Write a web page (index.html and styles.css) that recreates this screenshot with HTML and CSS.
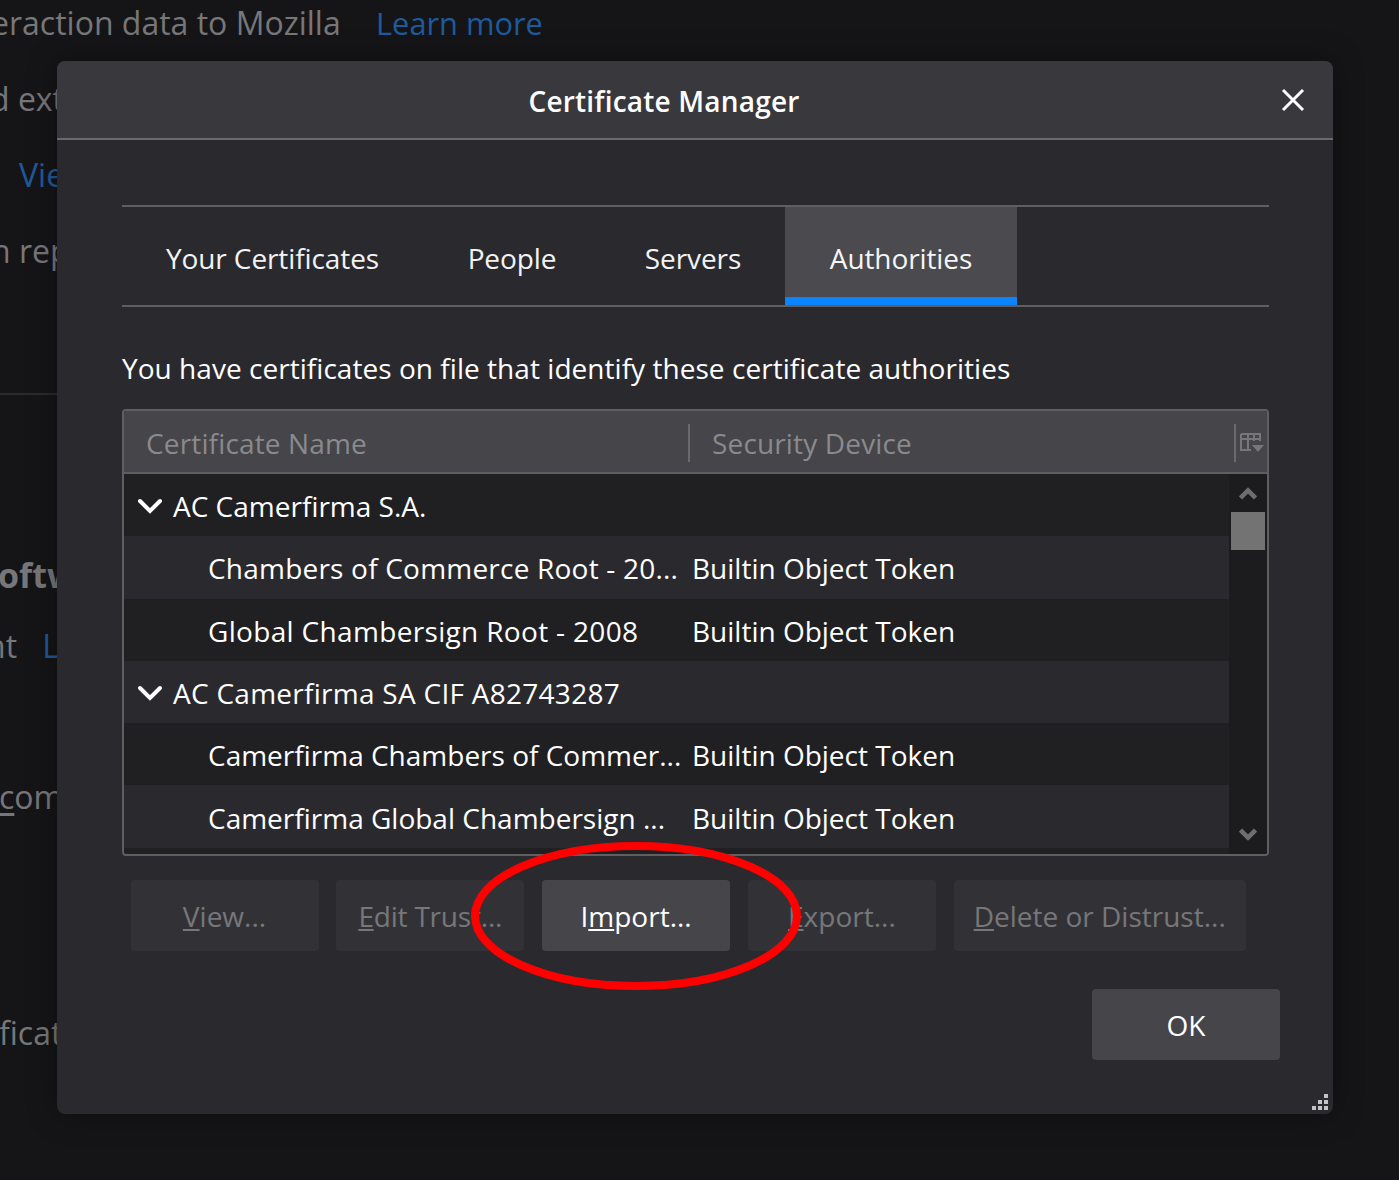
FILE: index.html
```html
<!DOCTYPE html>
<html lang="en">
<head>
<meta charset="utf-8">
<title>Certificate Manager</title>
<link rel="stylesheet" href="styles.css">
</head>
<body>
<main class="backdrop">
  <p class="bg-line l1">eraction data to Mozilla <a class="bg-link learn">Learn more</a></p>
  <p class="bg-line l2">d ext</p>
  <p class="bg-line l3 bg-link">Vie</p>
  <p class="bg-line l4">n rep</p>
  <hr class="bg-rule">
  <p class="bg-line l5 bg-strong">oftw</p>
  <p class="bg-line l6">nt <a class="bg-link lnk">L</a></p>
  <p class="bg-line l7"><span class="bg-under">c</span>om</p>
  <p class="bg-line l8">ficat</p>
</main>

<section class="dialog">
  <header class="dialog-head">
    <h1 class="dialog-title">Certificate Manager</h1>
    <svg class="close" width="24" height="24" viewBox="0 0 24 24"><path d="M2 2 L22 22 M22 2 L2 22" stroke="#fff" stroke-width="3" fill="none"/></svg>
  </header>
  <div class="dialog-body">
    <nav class="tabs">
      <div class="tab t1">Your Certificates</div>
      <div class="tab t2">People</div>
      <div class="tab t3">Servers</div>
      <div class="tab t4 active">Authorities</div>
    </nav>
    <p class="desc">You have certificates on file that identify these certificate authorities</p>
    <div class="tree">
      <div class="tree-head">
        <div class="col-name">Certificate Name</div>
        <div class="col-sep"></div>
        <div class="col-dev">Security Device</div>
        <div class="col-sep end"></div>
        <svg class="picker" width="24" height="22" viewBox="0 0 24 22">
          <path d="M1 2H20V9M1 2V18H11M1 7H20M8 2V18M14 2V9" fill="none" stroke="#77777a" stroke-width="2"/>
          <path d="M12 13H24L18 20Z" fill="#77777a"/>
        </svg>
      </div>
      <div class="tree-main">
        <div class="rows">
          <div class="row dark group"><svg class="twist" width="26" height="16" viewBox="0 0 26 16"><path d="M3 3 L13 13 L23 3" fill="none" stroke="#fff" stroke-width="4" stroke-linecap="round"/></svg><span>AC Camerfirma S.A.</span></div>
          <div class="row light"><span class="name wider-a">Chambers of Commerce Root - 20...</span><span>Builtin Object Token</span></div>
          <div class="row dark"><span class="name wider-b">Global Chambersign Root - 2008</span><span>Builtin Object Token</span></div>
          <div class="row light group"><svg class="twist" width="26" height="16" viewBox="0 0 26 16"><path d="M3 3 L13 13 L23 3" fill="none" stroke="#fff" stroke-width="4" stroke-linecap="round"/></svg><span class="wider-c">AC Camerfirma SA CIF A82743287</span></div>
          <div class="row dark"><span class="name">Camerfirma Chambers of Commer...</span><span>Builtin Object Token</span></div>
          <div class="row light"><span class="name">Camerfirma Global Chambersign ...</span><span>Builtin Object Token</span></div>
        </div>
        <div class="scrollbar">
          <svg class="arrow" width="18" height="14" viewBox="0 0 18 14"><path d="M1.500 11 L9 3.500 L16.500 11" fill="none" stroke="#6e6e70" stroke-width="4.500"/></svg>
          <div class="thumb"></div>
          <div class="track"></div>
          <svg class="arrow" width="18" height="14" viewBox="0 0 18 14"><path d="M1.500 3 L9 10.500 L16.500 3" fill="none" stroke="#6e6e70" stroke-width="4.500"/></svg>
        </div>
      </div>
    </div>
    <div class="actions">
      <button class="btn off"><u>V</u>iew...</button>
      <button class="btn off tight"><u>E</u>dit Trust...</button>
      <button class="btn on">I<u>m</u>port...</button>
      <button class="btn off"><u>E</u>xport...</button>
      <button class="btn off wide"><u>D</u>elete or Distrust...</button>
    </div>
    <div class="footer"><button class="btn on ok">OK</button></div>
  </div>
  <svg class="grip" width="16" height="16" viewBox="0 0 16 16" fill="#c4c4c4">
    <rect x="12" y="0" width="4" height="4"/><rect x="6" y="6" width="4" height="4"/><rect x="12" y="6" width="4" height="4"/>
    <rect x="0" y="12" width="4" height="4"/><rect x="6" y="12" width="4" height="4"/><rect x="12" y="12" width="4" height="4"/>
  </svg>
</section>

<svg class="circle" width="340" height="160" viewBox="0 0 340 160">
  <ellipse cx="170" cy="79" rx="161" ry="70" fill="none" stroke="#f00" stroke-width="8"/>
</svg>
</body>
</html>
```

FILE: styles.css
```css
* { box-sizing: border-box; }
html, body { margin: 0; height: 100%; }
body {
  background: #151517;
  color: #fff;
  font-family: "Open Sans", "Noto Sans", sans-serif;
  font-size: 28px;
  overflow: hidden;
}
.backdrop { height: 1180px; overflow: hidden; }
.bg-line {
  margin: 0;
  height: 40px;
  line-height: 40px;
  color: #77777a;
  white-space: nowrap;
  font-size: 32px;
}
.l1 { margin-top: 3px; margin-left: -9px; }
.l2 { margin-top: 36px; margin-left: -10px; }
.l3 { margin-top: 36px; margin-left: 19px; }
.l4 { margin-top: 36px; margin-left: -9px; }
.l5 { margin-top: 0; margin-left: -2px; }
.l6 { margin-top: 31px; margin-left: -14px; }
.l7 { margin-top: 111px; margin-left: -1px; }
.l8 { margin-top: 196px; margin-left: -1px; }
.bg-link { color: #1f5a9c; }
.learn { margin-left: 27px; font-size: 30.800px; }
.lnk { margin-left: 17px; }
.bg-strong { font-weight: 700; font-size: 34px; }
.bg-under { text-decoration: underline; text-underline-offset: 4px; }
.bg-rule { border: 0; width: 100px; height: 2px; background: #2b2b2e; margin: 122px 0 160px; }

.dialog {
  position: absolute;
  left: 57px;
  top: 61px;
  width: 1276px;
  height: 1053px;
  background: #2a2a2e;
  border-radius: 8px;
  display: flex;
  flex-direction: column;
  box-shadow: 0 0 30px rgba(0,0,0,.35);
}
.dialog-head {
  height: 79px;
  flex: none;
  background: #38383d;
  border-bottom: 2px solid #6a6a6d;
  border-radius: 8px 8px 0 0;
  position: relative;
  display: flex;
  align-items: center;
  justify-content: center;
  padding: 2px 62px 0 0;
}
.dialog-title { margin: 0; font-size: 28px; font-weight: 600; letter-spacing: .2px; }
.close { position: absolute; left: 1224px; top: 27px; }
.dialog-body {
  flex: 1;
  padding: 65px 64px 0 65px;
  display: flex;
  flex-direction: column;
}
.tabs {
  display: flex;
  height: 102px;
  flex: none;
  border-top: 2px solid #5f5f62;
  border-bottom: 2px solid #5f5f62;
}
.tab { display: flex; align-items: center; justify-content: center; height: 98px; color: #f3f3f3; padding-top: 4px; white-space: nowrap; letter-spacing: -.1px; }
.t1 { width: 301px; }
.t2 { width: 178px; }
.t3 { width: 184px; }
.t4 { width: 232px; }
.tab.active { background: #4a4a4f; border-bottom: 8px solid #0a84ff; padding-top: 12px; color: #f5f5f5; }
.desc { margin: 39px 0 0; height: 44px; line-height: 44px; font-size: 28px; white-space: nowrap; letter-spacing: .04px; }
.tree {
  margin-top: 19px;
  height: 447px;
  flex: none;
  border: 2px solid #5f5f62;
  border-radius: 4px;
  background: #202023;
  overflow: hidden;
  display: flex;
  flex-direction: column;
}
.tree-head {
  height: 63px;
  flex: none;
  display: flex;
  align-items: center;
  background: #45454a;
  border-bottom: 2px solid #5f5f62;
  color: #8a8a8d;
  padding-top: 2px;
  letter-spacing: .15px;
}
.col-name { width: 564px; padding-left: 22px; white-space: nowrap; }
.col-dev { width: 544px; padding-left: 22px; white-space: nowrap; }
.col-sep { width: 2px; height: 38px; background: #6a6a6d; flex: none; }
.picker { margin-left: 4px; flex: none; }
.tree-main { flex: 1; display: flex; min-height: 0; }
.rows { flex: 1; min-width: 0; }
.row { height: 62.300px; display: flex; align-items: center; white-space: nowrap; padding-top: 2px; }
.row.dark { background: #202023; }
.row.light { background: #2a2a2e; }
.name { width: 484px; margin-left: 84px; flex: none; }
.wider-a { letter-spacing: .21px; }
.wider-b { letter-spacing: .33px; }
.wider-c { letter-spacing: .27px; }
.group { padding-left: 13px; }
.twist { margin-right: 10px; flex: none; }
.scrollbar {
  width: 38px;
  flex: none;
  background: #1c1c1f;
  display: flex;
  flex-direction: column;
  align-items: center;
  padding: 13px 0 13px;
}
.arrow { flex: none; }
.thumb { width: 34px; height: 38px; background: #737373; margin-top: 11px; flex: none; }
.track { flex: 1; }
.actions { display: flex; gap: 17.800px; margin: 24px 0 0 8.500px; }
.btn {
  width: 188px;
  height: 71px;
  flex: none;
  border: 0;
  border-radius: 4px;
  font: inherit;
  padding: 0;
  white-space: nowrap;
}
.btn.off { background: #323236; color: #77777a; }
.btn.on { background: #45454a; color: #fff; }
.btn.tight { letter-spacing: -.2px; }
.btn.wide { width: 292px; }
.footer { display: flex; justify-content: flex-end; margin: 38px -11px 0 0; }
.grip { position: absolute; right: 5px; bottom: 4px; }
.circle { position: absolute; left: 466px; top: 837px; pointer-events: none; }
```
